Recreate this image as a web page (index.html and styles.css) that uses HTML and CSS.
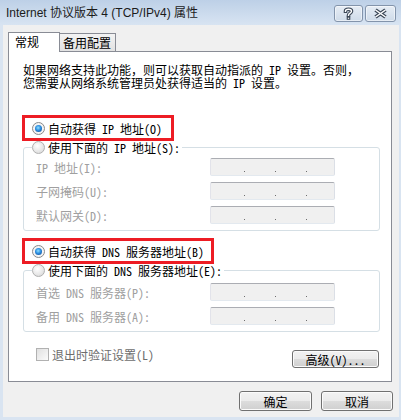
FILE: index.html
```html
<!DOCTYPE html>
<html lang="zh-CN">
<head>
    <meta charset="UTF-8">
    <title>Internet 协议版本 4 (TCP/IPv4) 属性</title>
    <link rel="stylesheet" href="styles.css">
</head>
<body>
<div class="window">
    <div class="titlebar">
        <span class="title">Internet 协议版本 4 (TCP/IPv4) 属性</span>
        <div class="caption-btns">
            <button class="cap-btn cap-help" aria-label="帮助">
                <svg width="27" height="15" viewBox="0 0 27 15">
                    <path d="M10.5 5.2 C10.5 2.6 16.5 2.6 16.5 5.2 C16.5 7.2 13.5 7.2 13.5 9.2" fill="none" stroke="#3a4656" stroke-width="3.6" stroke-linecap="square"/>
                    <rect x="11.7" y="10.6" width="3.6" height="3.2" fill="#3a4656"/>
                    <path d="M10.5 5.2 C10.5 2.6 16.5 2.6 16.5 5.2 C16.5 7.2 13.5 7.2 13.5 9.2" fill="none" stroke="#fff" stroke-width="1.4" stroke-linecap="square"/>
                    <rect x="12.8" y="11.7" width="1.4" height="1.1" fill="#fff"/>
                </svg>
            </button>
            <button class="cap-btn cap-close" aria-label="关闭">
                <svg width="29" height="15" viewBox="0 0 29 15">
                    <path d="M9.5 4 L19.5 11 M19.5 4 L9.5 11" fill="none" stroke="#3a4656" stroke-width="3.8"/>
                    <path d="M9.5 4 L19.5 11 M19.5 4 L9.5 11" fill="none" stroke="#fff" stroke-width="1.5"/>
                </svg>
            </button>
        </div>
    </div>

    <div class="client">
        <div class="tabs">
            <div class="tab active">常规</div>
            <div class="tab">备用配置</div>
        </div>

        <div class="panel">
            <p class="intro">如果网络支持此功能，则可以获取自动指派的 IP 设置。否则，<br>您需要从网络系统管理员处获得适当的 IP 设置。</p>

            <div class="mark mark-ip">
                <label class="radio-row"><span class="radio checked"></span>自动获得 IP 地址(O)</label>
            </div>

            <fieldset class="group group-ip">
                <legend><label class="radio-row"><span class="radio"></span>使用下面的 IP 地址(S):</label></legend>
                <div class="field"><span class="field-label">IP 地址(I):</span><span class="ip"><i></i><i></i><i></i></span></div>
                <div class="field"><span class="field-label">子网掩码(U):</span><span class="ip"><i></i><i></i><i></i></span></div>
                <div class="field"><span class="field-label">默认网关(D):</span><span class="ip"><i></i><i></i><i></i></span></div>
            </fieldset>

            <div class="mark mark-dns">
                <label class="radio-row"><span class="radio checked"></span>自动获得 DNS 服务器地址(B)</label>
            </div>

            <fieldset class="group group-dns">
                <legend><label class="radio-row"><span class="radio"></span>使用下面的 DNS 服务器地址(E):</label></legend>
                <div class="field"><span class="field-label">首选 DNS 服务器(P):</span><span class="ip"><i></i><i></i><i></i></span></div>
                <div class="field"><span class="field-label">备用 DNS 服务器(A):</span><span class="ip"><i></i><i></i><i></i></span></div>
            </fieldset>

            <div class="bottom-row">
                <label class="check-row"><span class="check"></span>退出时验证设置(L)</label>
                <button class="btn btn-adv">高级(V)...</button>
            </div>
        </div>

        <div class="footer">
            <button class="btn btn-ok">确定</button>
            <button class="btn btn-cancel">取消</button>
        </div>
    </div>
</div>
</body>
</html>
```

FILE: styles.css
```css
body {
    margin: 0;
    background: #d9e4f1;
    font-family: "Noto Sans Mono CJK SC", "Noto Sans CJK SC", sans-serif;
    font-size: 12px;
    color: #000;
}

.window {
    width: 401px;
    height: 420px;
    display: flex;
    flex-direction: column;
    background: #d9e4f1;
}

/* BARRA DE TITULO */
.titlebar {
    height: 25px;
    flex: none;
    display: flex;
    justify-content: space-between;
    align-items: flex-start;
    padding: 0 5px 0 6px;
    background: linear-gradient(#bdd0e7, #d8e4f2);
}

.title {
    font-family: "Liberation Sans", "Noto Sans CJK SC", sans-serif;
    font-size: 12px;
    line-height: 14px;
    margin-top: 6px;
    color: #1b1b1b;
}

.caption-btns {
    display: flex;
    gap: 2px;
    margin-top: 5px;
}

.cap-btn {
    height: 17px;
    padding: 0;
    border: 1px solid #8394ab;
    border-radius: 3px;
    background: linear-gradient(#e6edf5, #cfdbe9);
    box-shadow: inset 0 0 0 1px rgba(255, 255, 255, 0.5);
    display: flex;
}

.cap-help { width: 29px; }
.cap-close { width: 31px; }

/* AREA CLIENTE */
.client {
    flex: 1;
    display: flex;
    flex-direction: column;
    background: #f0f0f0;
    margin: 0 2px 3px 3px;
}

.tabs {
    display: flex;
    align-items: flex-end;
    height: 20px;
    margin: 7px 0 -1px 5px;
    position: relative;
    z-index: 1;
}

.tab {
    box-sizing: border-box;
    height: 18px;
    width: 57px;
    margin: 0 0 1px -1px;
    padding-left: 3px;
    border: 1px solid #898c95;
    border-bottom: none;
    background: linear-gradient(#f3f3f3, #e2e2e2);
    line-height: 17px;
}

.tab.active {
    height: 20px;
    width: 52px;
    margin: 0;
    padding-left: 6px;
    background: #fff;
    line-height: 17px;
    position: relative;
    z-index: 2;
}

.panel {
    box-sizing: border-box;
    height: 331px;
    margin: 0 7px 0 5px;
    padding: 11px 0 0 14px;
    background: #fff;
    border: 1px solid #898c95;
}

.intro {
    margin: 0;
    line-height: 13px;
    white-space: nowrap;
}

/* MARCAS ROJAS */
.mark {
    box-sizing: border-box;
    height: 26px;
    margin: 26px 0 0 -1px;
    padding-left: 7px;
    border: 3px solid #ed1c24;
    display: flex;
    align-items: center;
    width: 152px;
}

.mark-dns {
    width: 192px;
    margin-top: 7px;
}

.radio-row {
    display: flex;
    align-items: center;
    line-height: 13px;
    white-space: nowrap;
}

.radio {
    flex: none;
    box-sizing: border-box;
    width: 13px;
    height: 13px;
    margin-right: 3px;
    border-radius: 50%;
    border: 1px solid #b0b0b0;
    background: radial-gradient(circle at 40% 35%, #ffffff 0%, #e8e8e8 55%, #d2d2d2 100%);
    position: relative;
}

.radio.checked {
    border-color: #8a8a8a;
    background: #f4f4f4;
}

.radio.checked::after {
    content: '';
    position: absolute;
    inset: 2px;
    border-radius: 50%;
    background: radial-gradient(circle at 45% 40%, #8fe0ff 0%, #2c8ee0 45%, #0b3f86 100%);
}

/* GRUPOS */
.group {
    box-sizing: border-box;
    width: 357px;
    min-width: 0;
    margin: 0;
    padding: 4px 0 6px 8px;
    border: 1px solid #d5dfe5;
    border-radius: 3px;
}

.group-dns {
    padding-top: 6px;
}

.group legend {
    padding: 0 2px 0 0;
    height: 13px;
}

.field {
    display: flex;
    align-items: center;
    height: 18px;
    margin-left: 4px;
}

.field + .field {
    margin-top: 6px;
}

.field-label {
    width: 174px;
    flex: none;
    color: #a0a0a0;
    line-height: 13px;
}

.ip {
    box-sizing: border-box;
    width: 125px;
    height: 18px;
    display: flex;
    gap: 30px;
    padding: 12px 0 0 33px;
    background: #f0f0f0;
    border: 1px solid;
    border-color: #abadb3 #dbdfe6 #e3e9ef #e2e3ea;
    border-radius: 2px;
}

.ip i {
    width: 1px;
    height: 1px;
    background: #6d6d6d;
}

/* FILA INFERIOR */
.bottom-row {
    display: flex;
    align-items: flex-start;
    margin-top: 16px;
}

.check-row {
    display: flex;
    align-items: center;
    margin-left: 13px;
    line-height: 13px;
    color: #6d6d6d;
}

.check {
    box-sizing: border-box;
    width: 13px;
    height: 13px;
    margin-right: 3px;
    border: 1px solid #b1b1b1;
    background: linear-gradient(135deg, #e0e0e0, #fbfbfb);
}

.btn {
    box-sizing: border-box;
    padding: 0;
    font: inherit;
    color: #000;
    border: 1px solid #707070;
    border-radius: 3px;
    background: linear-gradient(#f2f2f2 0%, #ebebeb 50%, #dddddd 50%, #cfcfcf 100%);
    box-shadow: inset 0 0 0 1px #fbfbfb;
}

.btn-adv {
    width: 87px;
    height: 18px;
    margin: 2px 12px 0 auto;
}

.footer {
    display: flex;
    justify-content: flex-end;
    gap: 9px;
    margin-top: 9px;
    padding-right: 6px;
}

.btn-ok { width: 73px; height: 20px; }
.btn-cancel { width: 72px; height: 20px; }
```
